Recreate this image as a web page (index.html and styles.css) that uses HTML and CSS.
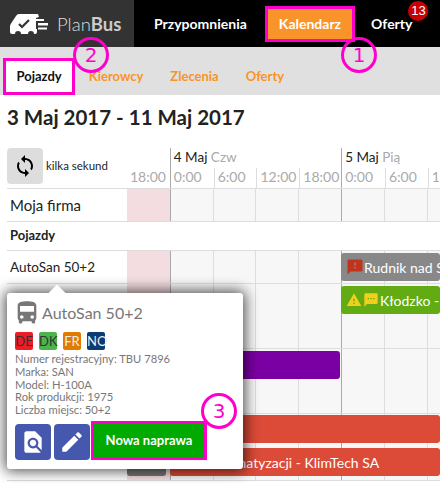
FILE: index.html
```html
<!DOCTYPE html>
<html lang="pl">
<head>
    <meta charset="UTF-8">
    <title>PlanBus - Kalendarz</title>
    <link rel="stylesheet" href="styles.css">
</head>
<body>
    <!-- Pasek gorny -->
    <header class="topbar">
        <div class="brand">
            <svg class="brand-icon" viewBox="0 0 40 22" width="40" height="22">
                <path fill="#fff" d="M0 13q0-1 1-2.500L6 3q1-2 3-2h19l1 3-3 1v11h1v3q0 2-2 2h-1a3 3 0 0 0-6 0h-7a3 3 0 0 0-6 0H2q-2 0-2-2z"/>
                <path fill="#fff" d="M24 6h10v2H24zM28 10h10v2.500H28zM28 14.500h9v2h-9z"/>
                <path fill="none" stroke="#333" stroke-width="2.200" d="M9 11l3 3 7-7"/>
            </svg>
            <span class="brand-name">Plan<b>Bus</b></span>
        </div>
        <nav class="mainnav">
            <a class="mainnav-item">Przypomnienia</a>
            <a class="mainnav-item is-active">Kalendarz</a>
            <a class="mainnav-item">Oferty<span class="count">13</span></a>
        </nav>
    </header>

    <div class="subnav">
        <a class="tab is-active">Pojazdy</a>
        <a class="tab">Kierowcy</a>
        <a class="tab">Zlecenia</a>
        <a class="tab">Oferty</a>
    </div>

    <h1 class="range">3 Maj 2017 - 11 Maj 2017</h1>

    <!-- Kalendarz -->
    <section class="timeline">
        <div class="row row-head">
            <div class="label refresh">
                <button class="refresh-btn">
                    <svg viewBox="0 0 24 24" width="24" height="24"><path d="M12 4V1L8 5l4 4V6c3.310 0 6 2.690 6 6 0 1.010-.25 1.970-.7 2.800l1.460 1.460C19.540 15.030 20 13.570 20 12c0-4.420-3.580-8-8-8zm0 14c-3.310 0-6-2.690-6-6 0-1.010.25-1.970.7-2.800L5.240 7.740C4.460 8.970 4 10.430 4 12c0 4.420 3.580 8 8 8v3l4-4-4-4v3z"/></svg>
                </button>
                <span class="refresh-text">kilka sekund</span>
            </div>
            <div class="day day-first">
                <div class="day-name"></div>
                <div class="hours"><span class="hour">18:00</span></div>
            </div>
            <div class="day">
                <div class="day-name">4 Maj <span>Czw</span></div>
                <div class="hours">
                    <span class="hour">0:00</span><span class="hour">6:00</span><span class="hour">12:00</span><span class="hour">18:00</span>
                </div>
            </div>
            <div class="day">
                <div class="day-name">5 Maj <span>Pią</span></div>
                <div class="hours">
                    <span class="hour">0:00</span><span class="hour">6:00</span><span class="hour">12:00</span><span class="hour">18:00</span>
                </div>
            </div>
        </div>

        <div class="row row-33">
            <div class="label">Moja firma</div>
            <div class="cells">
                <i class="cell pink"></i><i class="cell day-line"></i><i class="cell"></i><i class="cell"></i><i class="cell"></i><i class="cell day-line"></i><i class="cell"></i><i class="cell"></i>
            </div>
        </div>

        <div class="row row-group">
            <div class="label label-bold">Pojazdy</div>
        </div>

        <div class="row row-33">
            <div class="label label-small">AutoSan 50+2</div>
            <div class="cells">
                <i class="cell pink"></i><i class="cell day-line"></i><i class="cell"></i><i class="cell"></i><i class="cell"></i><i class="cell day-line"></i><i class="cell"></i><i class="cell"></i>
            </div>
            <div class="bar bar-gray">
                <svg viewBox="0 0 24 24" width="18" height="18"><path fill="#c0341d" d="M20 2H4c-1.100 0-1.990.9-1.990 2L2 22l4-4h14c1.100 0 2-.9 2-2V4c0-1.100-.9-2-2-2zm-7 12h-2v-2h2v2zm0-4h-2V6h2v4z"/></svg>
                <span>Rudnik nad Sanem</span>
            </div>
        </div>

        <div class="row row-65">
            <div class="label"></div>
            <div class="cells">
                <i class="cell pink"></i><i class="cell day-line"></i><i class="cell"></i><i class="cell"></i><i class="cell"></i><i class="cell day-line"></i><i class="cell"></i><i class="cell"></i>
            </div>
            <div class="bar bar-green">
                <svg viewBox="0 0 24 24" width="16" height="16"><path fill="#f2ce1d" d="M1 21h22L12 2 1 21zm12-3h-2v-2h2v2zm0-4h-2v-4h2v4z"/></svg>
                <svg viewBox="0 0 24 24" width="16" height="16"><path fill="#f2ce1d" d="M20 2H4c-1.100 0-1.990.9-1.990 2L2 22l4-4h14c1.100 0 2-.9 2-2V4c0-1.100-.9-2-2-2zM9 11H7V9h2v2zm4 0h-2V9h2v2zm4 0h-2V9h2v2z"/></svg>
                <span>Kłodzko - Sanok</span>
            </div>
        </div>

        <div class="row row-65">
            <div class="label"></div>
            <div class="cells">
                <i class="cell pink"></i><i class="cell day-line"></i><i class="cell"></i><i class="cell"></i><i class="cell"></i><i class="cell day-line"></i><i class="cell"></i><i class="cell"></i>
            </div>
            <div class="bar bar-purple"></div>
        </div>

        <div class="row row-67">
            <div class="label"></div>
            <div class="cells">
                <i class="cell pink"></i><i class="cell day-line"></i><i class="cell"></i><i class="cell"></i><i class="cell"></i><i class="cell day-line"></i><i class="cell"></i><i class="cell"></i>
            </div>
            <div class="bar bar-dark"></div>
            <div class="bar bar-red bar-red-top"></div>
            <div class="bar bar-red bar-red-low">Serwis klimatyzacji - KlimTech SA</div>
        </div>
    </section>

    <!-- Dymek z danymi pojazdu -->
    <aside class="popover">
        <h2 class="popover-title">
            <svg viewBox="0 0 24 24" width="28" height="28"><path fill="#777" d="M4 16c0 .88.39 1.670 1 2.220V20c0 .55.45 1 1 1h1c.55 0 1-.45 1-1v-1h8v1c0 .55.45 1 1 1h1c.55 0 1-.45 1-1v-1.780c.61-.55 1-1.340 1-2.220V6c0-3.500-3.580-4-8-4s-8 .5-8 4v10zm3.500 1c-.83 0-1.500-.67-1.500-1.500S6.670 14 7.500 14s1.500.67 1.500 1.500S8.330 17 7.500 17zm9 0c-.83 0-1.500-.67-1.500-1.500s.67-1.500 1.500-1.500 1.500.67 1.500 1.500-.67 1.500-1.500 1.500zm1.500-6H6V6h12v5z"/></svg>
            AutoSan 50+2
        </h2>
        <div class="flags">
            <span class="flag flag-de">DE</span>
            <span class="flag flag-dk">DK</span>
            <span class="flag flag-fr">FR</span>
            <span class="flag flag-no">NO</span>
        </div>
        <ul class="specs">
            <li>Numer rejestracyjny: TBU 7896</li>
            <li>Marka: SAN</li>
            <li>Model: H-100A</li>
            <li>Rok produkcji: 1975</li>
            <li>Liczba miejsc: 50+2</li>
        </ul>
        <div class="actions">
            <button class="icon-btn">
                <svg viewBox="0 0 24 24" width="26" height="26"><path fill="#fff" d="M20 19.590V8l-6-6H6c-1.100 0-1.990.9-1.990 2L4 20c0 1.100.89 2 1.990 2H18c.45 0 .85-.15 1.190-.4l-4.430-4.430c-.8.52-1.740.83-2.760.83-2.760 0-5-2.240-5-5s2.240-5 5-5 5 2.240 5 5c0 1.020-.31 1.960-.83 2.750L20 19.590zM9 13c0 1.660 1.340 3 3 3s3-1.340 3-3-1.340-3-3-3-3 1.340-3 3z"/></svg>
            </button>
            <button class="icon-btn">
                <svg viewBox="0 0 24 24" width="26" height="26"><path fill="#fff" d="M3 17.250V21h3.750L17.810 9.940l-3.750-3.750L3 17.250zM20.710 7.040c.39-.39.39-1.020 0-1.410l-2.340-2.340c-.39-.39-1.020-.39-1.410 0l-1.830 1.830 3.750 3.750 1.830-1.830z"/></svg>
            </button>
            <button class="repair-btn">Nowa naprawa</button>
        </div>
    </aside>

    <!-- Znaczniki instrukcji -->
    <span class="step step-1">1</span>
    <span class="step step-2">2</span>
    <span class="step step-3">3</span>
</body>
</html>
```

FILE: styles.css
```css
body {
    font-family: 'Lato', sans-serif;
    margin: 0;
    height: 483px;
    overflow: hidden;
    position: relative;
    background: #fff;
    color: #222;
}

/* Pasek gorny */
.topbar {
    display: flex;
    height: 47px;
    background: #000;
}

.brand {
    width: 134px;
    background: #333;
    display: flex;
    align-items: center;
    box-sizing: border-box;
    padding-left: 10px;
    gap: 7px;
}

.brand-icon {
    flex: none;
}

.brand-name {
    font-size: 18.5px;
    font-weight: 300;
    color: #ddd;
}

.brand-name b {
    font-weight: 700;
    color: #ccc;
}

.mainnav {
    display: flex;
    align-items: center;
    padding-left: 20px;
}

.mainnav-item {
    position: relative;
    color: #fff;
    font-size: 14px;
    font-weight: 700;
    margin-right: 18px;
}

.mainnav-item.is-active {
    background: #f9942a;
    border: 3px solid #ff00cc;
    padding: 0 11px;
    height: 30px;
    line-height: 30px;
    margin-right: 16px;
}

.count {
    position: absolute;
    top: -14px;
    right: -16px;
    width: 20px;
    height: 20px;
    border-radius: 50%;
    background: #c90000;
    font-family: 'Liberation Sans', sans-serif;
    font-size: 13px;
    font-weight: 400;
    line-height: 20px;
    text-align: center;
}

/* Zakladki */
.subnav {
    display: flex;
    align-items: flex-end;
    height: 48px;
    padding-left: 3px;
    background: #e0e0e0;
}

.tab {
    height: 37px;
    line-height: 36px;
    padding: 0 13.5px;
    font-size: 13px;
    font-weight: 700;
    color: #f9942a;
}

.tab.is-active {
    color: #111;
    background: #fff;
    box-shadow: inset 0 0 0 3px #ff00cc;
}

.range {
    margin: 9px 0 18px 7px;
    font-size: 20.5px;
    line-height: 26px;
    font-weight: 700;
    color: #222;
}

/* Kalendarz */
.timeline {
    margin-left: 7px;
}

.row {
    position: relative;
    display: flex;
    border-bottom: 1px solid #ddd;
    box-sizing: border-box;
}

.row-head { height: 41px; }
.row-33 { height: 33px; }
.row-group { height: 29px; }
.row-65 { height: 65px; }
.row-67 { height: 67px; }

.label {
    flex: 0 0 120px;
    padding-left: 3px;
    box-sizing: border-box;
    font-size: 15px;
    line-height: 32px;
}

.label-small {
    font-size: 13.500px;
}

.label-bold {
    font-size: 13px;
    font-weight: 700;
    line-height: 26px;
}

.refresh {
    display: flex;
    padding-left: 0;
    align-items: center;
    height: 36px;
    gap: 3px;
}

.refresh-btn {
    width: 36px;
    height: 36px;
    padding: 0;
    border: none;
    border-radius: 4px;
    background: #ddd;
    display: flex;
    align-items: center;
    justify-content: center;
}

.refresh-text {
    font-size: 11.500px;
}

.day {
    flex: none;
    width: 171.32px;
    box-sizing: border-box;
    border-left: 1px solid #aaa;
}

.day-first {
    width: 42.83px;
    border-left: none;
}

.day-name {
    height: 20px;
    padding-left: 3px;
    font-size: 13.500px;
    line-height: 18px;
    white-space: nowrap;
}

.day-name span {
    color: #aaa;
}

.hours {
    display: flex;
}

.hour {
    flex: none;
    width: 42.83px;
    height: 20px;
    box-sizing: border-box;
    border-left: 1px solid #ddd;
    padding-left: 3px;
    font-size: 14px;
    line-height: 18px;
    color: #aaa;
}

.hour:first-child {
    border-left: none;
}

.cells {
    display: flex;
}

.cell {
    flex: none;
    width: 42.83px;
    box-sizing: border-box;
    background: #f7f7f7;
    border-left: 1px solid #ddd;
}

.cell.pink {
    background: #f3dde0;
    border-left: none;
}

.cell.day-line {
    border-left-color: #aaa;
}

/* Wpisy na osi czasu */
.bar {
    position: absolute;
    box-sizing: border-box;
    height: 28px;
    border-radius: 3px;
    display: flex;
    align-items: center;
    padding-left: 5px;
    color: #fff;
    font-size: 14px;
    white-space: nowrap;
    overflow: hidden;
}

.bar svg {
    flex: none;
}

.bar-gray {
    top: 2px;
    left: 334px;
    width: 99px;
    background: #888;
}

.bar-green {
    top: 2px;
    left: 334px;
    width: 99px;
    background: #62ab13;
    gap: 1px;
}

.bar-purple {
    top: 2px;
    left: 150px;
    width: 183px;
    background: #7b00a3;
}

.bar-dark {
    top: 34px;
    left: 120px;
    width: 39px;
    background: #777;
}

.bar-red {
    left: 163px;
    width: 270px;
    background: #dc4a38;
}

.bar-red-top { top: 1px; }
.bar-red-low { top: 34px; padding-left: 7px; }

/* Dymek */
.popover {
    position: absolute;
    left: 7px;
    top: 293px;
    width: 236px;
    height: 176px;
    box-sizing: border-box;
    padding: 6px 8px;
    background: #fff;
    border-radius: 3px;
    box-shadow: 0 0 14px 2px rgba(0, 0, 0, 0.7);
}

.popover::before {
    content: "";
    position: absolute;
    left: 44px;
    top: -6px;
    width: 12px;
    height: 12px;
    background: #fff;
    transform: rotate(45deg);
}

.popover-title {
    display: flex;
    align-items: center;
    gap: 1px;
    margin: 0 0 5px -2px;
    font-size: 16px;
    font-weight: 400;
    line-height: 28px;
    color: #777;
}

.flags {
    display: flex;
    gap: 6px;
}

.flag {
    width: 18px;
    height: 18px;
    border-radius: 2px;
    font-size: 13px;
    line-height: 18px;
    text-align: center;
    color: #333;
}

.flag-de { background: #ee1c25; }
.flag-dk { background: #4ab54a; }
.flag-fr { background: #e07b00; color: #eee; }
.flag-no { background: #0b3d75; color: #eee; }

.specs {
    list-style: none;
    margin: 3px 0 0;
    padding: 0;
    font-size: 11.200px;
    line-height: 12.75px;
    color: #777;
}

.actions {
    display: flex;
    gap: 3px;
    margin-top: 7px;
}

.icon-btn {
    width: 36px;
    height: 36px;
    padding: 0;
    border: none;
    border-radius: 4px;
    background: #4558ad;
    display: flex;
    align-items: center;
    justify-content: center;
}

.repair-btn {
    width: 116px;
    height: 39px;
    margin: -3px 0 0 -2px;
    box-sizing: border-box;
    border: 3px solid #ff00cc;
    background: #00aa00;
    color: #fff;
    font-family: 'Lato', sans-serif;
    font-size: 13px;
    font-weight: 700;
}

/* Znaczniki */
.step {
    position: absolute;
    box-sizing: border-box;
    width: 36px;
    height: 36px;
    border: 3px solid #ff00cc;
    border-radius: 50%;
    color: #ff00cc;
    font-family: 'DejaVu Sans', sans-serif;
    font-size: 20px;
    line-height: 30px;
    text-align: center;
}

.step-1 { left: 341px; top: 37px; }
.step-2 { left: 73px; top: 37px; }
.step-3 { left: 201px; top: 393px; }
```
